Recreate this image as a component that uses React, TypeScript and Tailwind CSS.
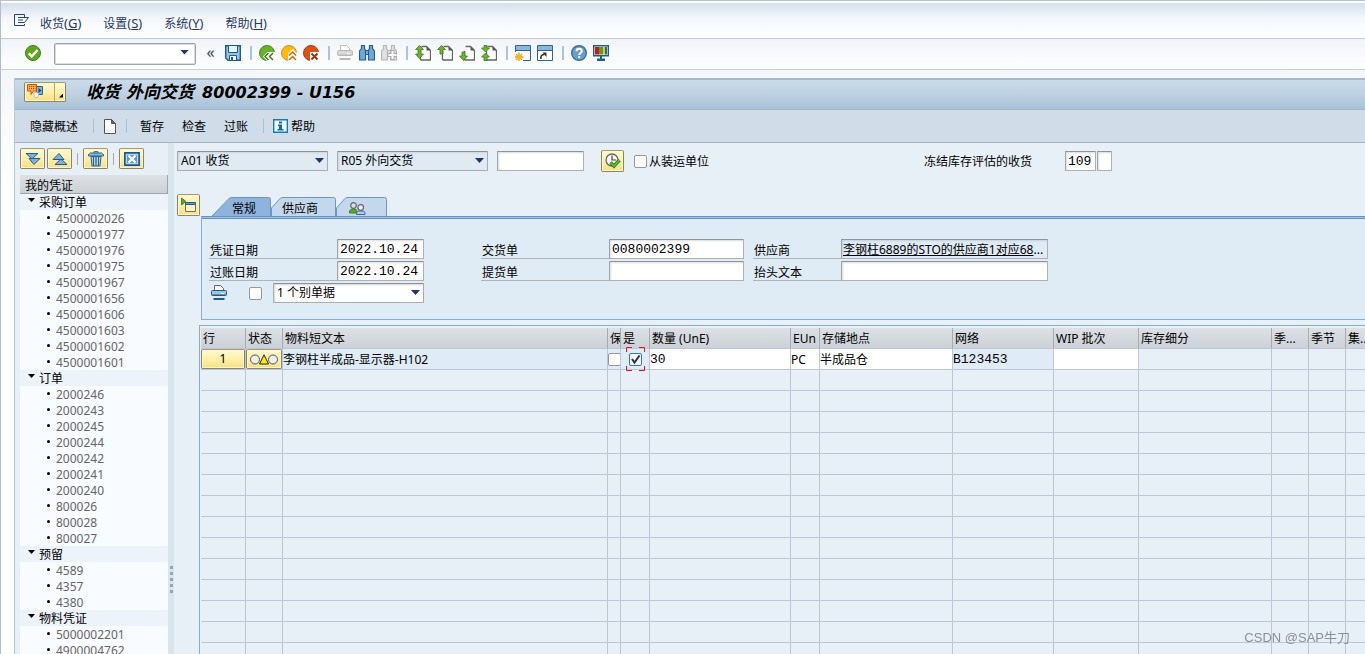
import { useState } from 'react';
import type { ReactNode } from 'react';
import clsx from 'clsx';

type TreeGroup = { label: string; items: string[] };

const MENU = [
  { label: '收货', key: 'G' },
  { label: '设置', key: 'S' },
  { label: '系统', key: 'Y' },
  { label: '帮助', key: 'H' },
];

const TREE: TreeGroup[] = [
  {
    label: '采购订单',
    items: [
      '4500002026',
      '4500001977',
      '4500001976',
      '4500001975',
      '4500001967',
      '4500001656',
      '4500001606',
      '4500001603',
      '4500001602',
      '4500001601',
    ],
  },
  {
    label: '订单',
    items: [
      '2000246',
      '2000243',
      '2000245',
      '2000244',
      '2000242',
      '2000241',
      '2000240',
      '800026',
      '800028',
      '800027',
    ],
  },
  { label: '预留', items: ['4589', '4357', '4380'] },
  { label: '物料凭证', items: ['5000002201', '4900004762'] },
];

const COLUMNS = [
  { label: '行', width: 'w-[45px]' },
  { label: '状态', width: 'w-[37px]' },
  { label: '物料短文本', width: 'w-[325px]' },
  { label: '保', width: 'w-[13px]' },
  { label: '是', width: 'w-[29px]' },
  { label: '数量 (UnE)', width: 'w-[141px]' },
  { label: 'EUn', width: 'w-[29px]' },
  { label: '存储地点', width: 'w-[133px]' },
  { label: '网络', width: 'w-[101px]' },
  { label: 'WIP 批次', width: 'w-[85px]' },
  { label: '库存细分', width: 'w-[133px]' },
  { label: '季...', width: 'w-[37px]' },
  { label: '季节', width: 'w-[37px]' },
  { label: '集...', width: 'w-[37px]' },
];

const EMPTY_ROWS = 40;

const SANS = "font-['Noto_Sans','Noto_Sans_CJK_SC',sans-serif]";
const MONO = "font-['Liberation_Mono','Noto_Sans_CJK_SC',monospace] text-[13px]";
const FIELD =
  'h-5 min-w-0 rounded-[1px] border border-[#b0b0b0] border-t-[#909599] border-l-[#a0a5a9] bg-white pl-0.5 leading-4 text-black shadow-[inset_1px_1px_2px_#d8dde2] outline-none';
const YELLOW =
  'flex items-center justify-center rounded-[2px] border border-[#8b8466] border-t-[#a19a79] bg-linear-to-b from-[#fff9d2] via-[#fff0a8] to-[#f8df83] shadow-[inset_0_0_0_1px_#fff6cd]';

/* ---------- icons ---------- */

function Svg({ w = 16, h = 16, children }: { w?: number; h?: number; children: ReactNode }) {
  return (
    <svg width={w} height={h} viewBox={`0 0 ${w} ${h}`} fill="none" className="block shrink-0" aria-hidden="true">
      {children}
    </svg>
  );
}

function CommandIcon() {
  return (
    <Svg w={16} h={13}>
      <path d="M10.500 3V.5H.5v11h10V10" stroke="#28406f" />
      <path d="M4 3.500h10.500L10.500 8.500H4M4 6h5" stroke="#28406f" />
    </Svg>
  );
}

function OkIcon() {
  return (
    <Svg>
      <circle cx="8" cy="8" r="7.500" fill="#62a81f" stroke="#3f7d18" />
      <path d="M3.800 8.300l3 3 5.700-6.300" stroke="#fff" strokeWidth="2.400" />
    </Svg>
  );
}

function SaveIcon() {
  return (
    <Svg>
      <path d="M.7.7h14.600v14.600H3L.7 13z" fill="#9cc3e4" stroke="#15608f" strokeWidth="1.400" />
      <path d="M3.500 1v6.500h9V1" fill="#eaf3fa" stroke="#15608f" />
      <path d="M4.500 15v-4.500h7V15" fill="#fff" stroke="#15608f" />
      <path d="M6 12h2v3H6z" fill="#15608f" />
    </Svg>
  );
}

function BackIcon() {
  return (
    <Svg>
      <circle cx="8" cy="8" r="7.500" fill="#6bb12a" stroke="#3f8a1a" />
      <path d="M4 11.500l4.500-4.500H16v9H8z" fill="#fff" />
      <path d="M9.500 8L6 11.500 9.500 15M14 8l-3.500 3.500L14 15" stroke="#3c7d1c" strokeWidth="1.500" />
    </Svg>
  );
}

function ExitIcon() {
  return (
    <Svg>
      <circle cx="8" cy="8" r="7.500" fill="#fdbb12" stroke="#e08a10" />
      <path d="M11.500 4L17 9v7H7V9z" fill="#fff" />
      <path d="M8 10.500L11.500 7l3.500 3.500M8 15l3.500-3.500L15 15" stroke="#d9650c" strokeWidth="1.500" />
    </Svg>
  );
}

function CancelIcon() {
  return (
    <Svg>
      <circle cx="8" cy="8" r="7.500" fill="#db5316" stroke="#b23a0c" />
      <path d="M7 7h9v9H7z" fill="#fff" />
      <path d="M8.500 8.500l6 6m0-6l-6 6" stroke="#9c3413" strokeWidth="2" />
    </Svg>
  );
}

function PrinterIcon({ disabled = false }: { disabled?: boolean }) {
  const line = disabled ? '#b9b9b9' : '#1a5c8a';
  return (
    <Svg>
      <path d="M3.500 7V.5h6l3 3V7" fill="#fff" stroke={disabled ? '#b9b9b9' : '#666'} />
      <rect x=".5" y="5.500" width="15" height="5" rx="1" fill={disabled ? '#d9d9d9' : '#9fc6e6'} stroke={line} />
      <path d="M10 8.500h3" stroke="#fff" />
      <path d="M1 10h14" stroke={line} />
      <path d="M2.500 13h11v2h-11z" fill={line} />
    </Svg>
  );
}

function FindIcon({ next = false }: { next?: boolean }) {
  const line = next ? '#b5b5b5' : '#1f5f92';
  const fill = next ? '#e0e0e0' : '#74a9d6';
  return (
    <Svg>
      <path
        d="M2.500.5h3v3l1 2v9.500H.5V6l2-2.500zM10.500.5h3v3l2 2.500v9h-6V5.500l1-2z"
        fill={fill}
        stroke={line}
        strokeWidth="1.200"
      />
      <path d="M6.500 5.500h3v4h-3z" fill={fill} stroke={line} />
      {next && <path d="M11.500 5v10M6.500 10h10" stroke="#aaa" strokeWidth="4" />}
      {next && <path d="M11.500 6v8M7.500 10h8" stroke="#fff" strokeWidth="2" />}
    </Svg>
  );
}

// Small green arrows placed over a sheet: the four list paging commands
function PageIcon({ arrows }: { arrows: string }) {
  return (
    <Svg>
      <path d="M6.500 1.500h5l4 4v9.500H5.500" fill="#fff" stroke="#666" strokeWidth="1.300" />
      <path d="M5.500 6v9" stroke="#666" strokeWidth="1.300" />
      <path d="M11.500 1.500v4h4z" fill="#555" />
      <path d={arrows} fill="#6eb52c" stroke="#397b1d" strokeWidth=".8" />
    </Svg>
  );
}

const PAGE_ARROWS = [
  'M4.500.5l4 4H6V9h2.500l-4 4.500-4-4.500H3V4.500H.5z',
  'M4.500.5l4 4H6V9H3V4.500H.5z',
  'M3 7h3v4h2.500l-4 4.500-4-4.500H3z',
  'M3 .5h3V3h2.500l-4 4-4-4H3zM4.500 8l4 4H6v3.500H3V12H.5z',
];

function WindowIcon({ shortcut = false }: { shortcut?: boolean }) {
  return (
    <Svg>
      <path d="M.5.500h15v15H.5z" fill="#fff" stroke="#286797" />
      <path d="M1 1h14v4H1z" fill="#8ab7df" />
      <path d="M0 5.500h16" stroke="#286797" />
      {shortcut ? (
        <>
          <path d="M4 14c-.5-3 .5-4.500 3.500-4.500" stroke="#333" strokeWidth="1.600" />
          <path d="M5.500 7.500h4v4.500z" fill="#333" />
        </>
      ) : (
        <>
          <path d="M0 7h8v9H0z" fill="#fff" />
          <path d="M4 7.500v9M-.5 12h9M1 9l6 6M7 9l-6 6" stroke="#f09a12" strokeWidth="1.400" />
          <circle cx="4" cy="12" r="2.200" fill="#fdb714" />
        </>
      )}
    </Svg>
  );
}

function HelpIcon() {
  return (
    <Svg>
      <circle cx="8" cy="8" r="7.300" fill="#6a9fcb" stroke="#396f9d" strokeWidth="1.400" />
      <path d="M5.500 6.200C5.500 2.800 10.800 3 10.800 6c0 2-2.600 2-2.600 4" stroke="#fff" strokeWidth="1.900" />
      <path d="M7.200 11.200h2v2h-2z" fill="#fff" />
    </Svg>
  );
}

function MonitorIcon() {
  return (
    <Svg>
      <path d="M.7.700h14.600v10H.7z" fill="#fff" stroke="#1c5d8c" strokeWidth="1.400" />
      <path d="M2 2h4v7.500H2z" fill="#d21414" />
      <path d="M6 2h4v7.500H6z" fill="#4da32c" />
      <path d="M10 2h2v7.500h-2z" fill="#f5c400" />
      <path d="M12 2h2v7.500h-2z" fill="#1d67b0" />
      <path d="M7 11h2v3H7zM4 13.500h8V16H4z" fill="#1c5d8c" />
    </Svg>
  );
}

function ServiceIcon() {
  return (
    <Svg w={17} h={15}>
      <path d="M9.500 2.500h6v8h-6z" fill="#7db5e0" stroke="#28648f" />
      <path d="M11.500 4l3 2.500-3 2.500z" fill="#16456c" />
      <path d="M.5.500h9v6.500H6.500L4 10.500V7H.5z" fill="#f7b04a" stroke="#d94e12" />
      <path d="M2 2.500h6.500M2 4.500h6.500" stroke="#c73f10" strokeDasharray="1 1" />
      <path d="M6.500 9.500l3-1.500 2.500 2-1.500 3.500H8z" fill="#fff" stroke="#999" strokeWidth=".6" />
    </Svg>
  );
}

function SheetIcon() {
  return (
    <Svg w={12} h={15}>
      <path d="M.5.500h7l4 4v10H.5z" fill="#fff" stroke="#555" />
      <path d="M7.500.5v4h4z" fill="#666" stroke="#555" />
    </Svg>
  );
}

function InfoIcon() {
  return (
    <Svg w={15} h={14}>
      <path d="M.7.700h13.600v12.600H.7z" fill="#f4f9fc" stroke="#0d7fb8" strokeWidth="1.400" />
      <path d="M6 2.500h3v2H6zM5 5.500h4V10h1.500v1.500h-6V10H6V7H5z" fill="#0a6ea8" />
    </Svg>
  );
}

function ExpandIcon({ up = false }: { up?: boolean }) {
  return (
    <Svg w={16} h={12}>
      <g transform={up ? 'rotate(180 8 6)' : undefined} fill="#7fb1dc" stroke="#1e5f92">
        <path d="M4 5.500h11L9 11.500z" />
        <path d="M1 .5h12L7 6z" />
      </g>
    </Svg>
  );
}

function TrashIcon() {
  return (
    <Svg w={16} h={16}>
      <path d="M3 5.500h10l-1 9.500H4z" fill="#c3dcf0" stroke="#28648f" />
      <path d="M5.500 6v9M8 6v9M10.500 6v9" stroke="#28648f" strokeWidth="1.200" />
      <path d="M.5 5V3.500l2-1.500h11l2 1.500V5z" fill="#8dbbe0" stroke="#28648f" />
      <path d="M6 2V.7h4V2" stroke="#28648f" />
    </Svg>
  );
}

function CloseBoxIcon() {
  return (
    <Svg w={16} h={14}>
      <path d="M.7.700h14.600v12.600H.7z" fill="#5f9bcb" stroke="#1d5a8a" strokeWidth="1.400" />
      <path d="M2.500 2.500h11v9h-11z" stroke="#d4e6f4" strokeWidth=".8" />
      <path d="M4.500 3.500l7 7m0-7l-7 7" stroke="#fff" strokeWidth="2.200" />
    </Svg>
  );
}

function OpenDetailIcon() {
  return (
    <Svg w={16} h={16}>
      <path d="M4.500 5.500h10v9h-10z" fill="#fff3bd" stroke="#66707a" />
      <path d="M4.500 5.500h10v2h-10z" fill="#6aa3d3" stroke="#1d5a8a" />
      <path d="M.5 1l4.500 3.500L.5 8z" fill="#5da52a" stroke="#357a18" strokeWidth=".8" />
    </Svg>
  );
}

function ExecuteIcon() {
  return (
    <Svg>
      <circle cx="7" cy="7" r="6" fill="#f7f7ef" stroke="#666" strokeWidth="1.300" />
      <path d="M7 2.500V7h4" stroke="#444" strokeWidth="1.200" />
      <path d="M5.500 9.500L9 13l5.500-6" stroke="#2b7a18" strokeWidth="3.400" />
      <path d="M5.500 9.500L9 13l5.500-6" stroke="#6fbf3a" strokeWidth="1.600" />
    </Svg>
  );
}

function PartnersIcon() {
  return (
    <Svg w={17} h={13}>
      <path d="M.5 11V9l2-2h4l1.500 2v2z" fill="#58a829" stroke="#3a8418" />
      <circle cx="4.500" cy="3.500" r="2.800" fill="#dedede" stroke="#666" strokeWidth="1.200" />
      <path d="M7.500 12.500v-2l2-1.500h4.500l2 1.500v2z" fill="#a9cdea" stroke="#2f6c9c" />
      <circle cx="11.700" cy="5.500" r="2.800" fill="#efefef" stroke="#666" strokeWidth="1.200" />
    </Svg>
  );
}

function TrafficLight() {
  return (
    <Svg w={28} h={11}>
      <circle cx="5" cy="5.500" r="4.500" fill="#eee" stroke="#555" />
      <circle cx="23" cy="5.500" r="4.500" fill="#eee" stroke="#555" />
      <path d="M14 .8l4.500 9.200h-9z" fill="#ffec00" stroke="#222" />
    </Svg>
  );
}

/* ---------- controls ---------- */

function IconButton({ label, children }: { label: string; children: ReactNode }) {
  return (
    <button type="button" aria-label={label} title={label}>
      {children}
    </button>
  );
}

function ToolSeparator() {
  return <span className="mr-px ml-[3px] h-3.5 w-0.5 bg-[#a9c4de]" />;
}

function DropDown({ label, value, className }: { label: string; value: string; className: string }) {
  return (
    <div className="relative flex">
      <select
        aria-label={label}
        className={clsx(
          'h-5 appearance-none rounded-[1px] border border-[#a9adb0] border-t-[#8c9296] pl-[3px] leading-4 text-black shadow-[inset_1px_1px_2px_#ccd6de] outline-none',
          className,
        )}
      >
        <option>{value}</option>
      </select>
      <span className="pointer-events-none absolute top-[7px] right-1 h-[5px] w-[9px] bg-[#1f356b] [clip-path:polygon(0_0,100%_0,50%_100%)]" />
    </div>
  );
}

function CheckBox({ id, label }: { id?: string; label?: string }) {
  return (
    <input
      id={id}
      type="checkbox"
      aria-label={label}
      className="block size-[13px] shrink-0 appearance-none rounded-[2px] border border-[#979797] bg-white checked:bg-[#2f6fad]"
    />
  );
}

function Field({
  id,
  label,
  value,
  labelWidth,
  inputWidth,
}: {
  id: string;
  label: string;
  value: string;
  labelWidth: string;
  inputWidth: string;
}) {
  return (
    <div className="flex">
      <label htmlFor={id} className={clsx('h-5 shrink-0 border-b border-[#aeb3b7] pl-px leading-6', labelWidth)}>
        {label}
      </label>
      <input id={id} defaultValue={value} className={clsx(FIELD, MONO, inputWidth)} />
    </div>
  );
}

/* ---------- page parts ---------- */

function MenuBar() {
  return (
    <nav className="flex h-[39px] shrink-0 items-center border-b border-[#c3ccd8] bg-linear-to-b from-[#cddae8] via-[#f3f6fa] via-45% to-white pt-2 pl-[13px] text-[#1f3864] shadow-[inset_0_1px_0_#b4c3d4,inset_0_3px_0_#ffffff]">
      <div className="mb-1.5">
        <CommandIcon />
      </div>
      <div className="flex gap-[22px] pt-px pl-2.5">
        {MENU.map((item) => (
          <button key={item.key} type="button" className="leading-4">
            {item.label}
            <span className="text-[13px]">
              (<u>{item.key}</u>)
            </span>
          </button>
        ))}
      </div>
    </nav>
  );
}

function StandardToolbar() {
  return (
    <div className="flex h-[31px] shrink-0 items-center gap-1.5 border-b border-[#ccd0d8] bg-linear-to-b from-[#f1f4f9] to-white pb-0.5 pl-6">
      <IconButton label="回车">
        <OkIcon />
      </IconButton>
      <div className="relative ml-[7px] flex pt-px">
        <input
          aria-label="命令"
          className="h-[22px] w-[142px] rounded-[2px] border border-[#9da3a6] bg-white pr-5 pl-1 shadow-[inset_0_0_0_1px_#d9dcde] outline-none"
        />
        <span className="pointer-events-none absolute top-2 right-[7px] h-[5px] w-[9px] bg-[#1f356b] [clip-path:polygon(0_0,100%_0,50%_100%)]" />
      </div>
      <button type="button" className="w-[17px] pb-0.5 text-base leading-4 text-[#444]">
        «
      </button>
      <IconButton label="保存">
        <SaveIcon />
      </IconButton>
      <ToolSeparator />
      <IconButton label="返回">
        <BackIcon />
      </IconButton>
      <IconButton label="退出">
        <ExitIcon />
      </IconButton>
      <IconButton label="取消">
        <CancelIcon />
      </IconButton>
      <ToolSeparator />
      <IconButton label="打印">
        <PrinterIcon disabled />
      </IconButton>
      <IconButton label="查找">
        <FindIcon />
      </IconButton>
      <IconButton label="继续查找">
        <FindIcon next />
      </IconButton>
      <ToolSeparator />
      {PAGE_ARROWS.map((arrows, i) => (
        <IconButton key={arrows} label={['首页', '上一页', '下一页', '末页'][i]}>
          <PageIcon arrows={arrows} />
        </IconButton>
      ))}
      <ToolSeparator />
      <IconButton label="新建会话">
        <WindowIcon />
      </IconButton>
      <IconButton label="创建快捷方式">
        <WindowIcon shortcut />
      </IconButton>
      <ToolSeparator />
      <IconButton label="帮助">
        <HelpIcon />
      </IconButton>
      <IconButton label="定制布局">
        <MonitorIcon />
      </IconButton>
    </div>
  );
}

function TitleBar() {
  return (
    <header className="flex h-8 shrink-0 items-center border-t-2 border-b border-t-[#a3b8cc] border-b-[#9fb6cb] bg-linear-to-b from-[#cbdbe7] via-[#bed1e2] to-[#a9c1d8] pl-[9px]">
      <button type="button" aria-label="对象服务" className={clsx(YELLOW, 'mb-1.5 h-5 w-[42px] justify-start pl-0.5')}>
        <ServiceIcon />
        <span className="ml-2.5 h-full w-px bg-[#b3a878]" />
        <span className="mt-2 ml-1 size-1 bg-black [clip-path:polygon(100%_0,100%_100%,0_100%)]" />
      </button>
      <h1 className="mb-1 pl-5 font-['DejaVu_Sans','Noto_Sans_CJK_SC',sans-serif] leading-6 font-bold whitespace-nowrap text-black italic">
        <span className="pr-1 text-[17px]">收货 外向交货</span> <span className="text-base">80002399 - U156</span>
      </h1>
    </header>
  );
}

function AppToolbar() {
  const separator = <span className="h-3.5 w-px bg-[#a9bfd6]" />;
  return (
    <div className="flex h-[33px] shrink-0 items-center border-b border-[#a3b8cc] bg-[#d0dde8] pl-[15px]">
      <button type="button" className="pt-0.5">
        隐藏概述
      </button>
      <div className="flex items-center gap-2.5 pl-[15px]">
        {separator}
        <IconButton label="新建">
          <SheetIcon />
        </IconButton>
        {separator}
      </div>
      <div className="flex gap-[18px] px-[13px] pt-0.5">
        <button type="button">暂存</button>
        <button type="button">检查</button>
        <button type="button">过账</button>
      </div>
      <div className="flex items-center gap-[9px] pl-0.5">
        {separator}
        <button type="button" className="flex items-center gap-[3px]">
          <InfoIcon />
          <span className="pt-0.5">帮助</span>
        </button>
      </div>
    </div>
  );
}

function Overview() {
  return (
    <aside className="flex w-[153px] shrink-0 flex-col overflow-hidden pt-[5px] pl-[5px]">
      <div className="flex shrink-0 items-center gap-0.5">
        <button type="button" aria-label="全部展开" className={clsx(YELLOW, 'h-[21px] w-[25px]')}>
          <ExpandIcon />
        </button>
        <button type="button" aria-label="全部折叠" className={clsx(YELLOW, 'h-[21px] w-[25px]')}>
          <ExpandIcon up />
        </button>
        <span className="mx-[3px] h-3 w-px bg-[#a9a9a9]" />
        <button type="button" aria-label="删除" className={clsx(YELLOW, 'h-[21px] w-[25px]')}>
          <TrashIcon />
        </button>
        <span className="mx-[3px] h-3 w-px bg-[#a9a9a9]" />
        <button type="button" aria-label="关闭" className={clsx(YELLOW, 'h-[21px] w-[25px]')}>
          <CloseBoxIcon />
        </button>
      </div>
      <h2 className="mt-1.5 h-[19px] shrink-0 border-r border-b border-[#9ba5ad] bg-linear-to-b from-[#dde1e4] to-[#cbd1d6] pl-[5px] leading-[21px]">
        我的凭证
      </h2>
      <ul className="grow bg-[#f8fbff]">
        {TREE.map((group) => (
          <TreeBranch key={group.label} group={group} />
        ))}
      </ul>
    </aside>
  );
}

function TreeBranch({ group }: { group: TreeGroup }) {
  const [open, setOpen] = useState(true);

  return (
    <li>
      <button
        type="button"
        aria-expanded={open}
        onClick={() => setOpen(!open)}
        className="flex h-4 w-full items-center gap-1 bg-[#edf3fb] pl-2"
      >
        <span className="mb-1 h-1 w-[7px] bg-black [clip-path:polygon(0_0,100%_0,50%_100%)]" />
        <span className="pt-0.5 leading-4">{group.label}</span>
      </button>
      {open && (
        <ul>
          {group.items.map((item) => (
            <li key={item} className="flex h-4 items-center gap-1.5 pl-[27px] text-[#666]">
              <span className="mb-0.5 size-[3px] rounded-full bg-black" />
              <span className="pt-0.5 leading-4">{item}</span>
            </li>
          ))}
        </ul>
      )}
    </li>
  );
}

function Splitter() {
  return (
    <div className="flex w-1.5 shrink-0 flex-col items-center justify-end gap-[3px] bg-[#d9e5ec] pb-[61px]">
      {[0, 1, 2, 3, 4].map((i) => (
        <span key={i} className="size-[3px] bg-[#98a4b0]" />
      ))}
    </div>
  );
}

function SelectionRow() {
  return (
    <div className="flex h-[22px] shrink-0 items-center pl-[3px]">
      <DropDown label="事务" value="A01 收货" className="w-[151px] bg-[#dfeaf3]" />
      <div className="pl-[9px]">
        <DropDown label="参考凭证" value="R05 外向交货" className="w-[151px] bg-[#dfeaf3]" />
      </div>
      <div className="flex pl-[9px]">
        <input aria-label="凭证编号" className={clsx(FIELD, 'w-[87px]')} />
      </div>
      <div className="pl-[17px]">
        <button type="button" aria-label="执行" className={clsx(YELLOW, 'h-[22px] w-[23px]')}>
          <ExecuteIcon />
        </button>
      </div>
      <div className="flex items-center gap-0.5 pl-2.5">
        <CheckBox id="from-hu" />
        <label htmlFor="from-hu" className="pt-0.5">
          从装运单位
        </label>
      </div>
      <div className="flex items-center pl-[215px]">
        <label htmlFor="movement" className="w-[141px] pt-0.5 whitespace-nowrap">
          冻结库存评估的收货
        </label>
        <input id="movement" defaultValue="109" className={clsx(FIELD, MONO, 'mr-px w-[31px]')} />
        <input aria-label="特殊库存" className={clsx(FIELD, 'w-[15px]')} />
      </div>
    </div>
  );
}

function Tab({ active = false, width, children }: { active?: boolean; width: number; children: ReactNode }) {
  const slope = active ? `M0 19L17 1.500Q18 .5 20 .5` : `M.5 19V11L9 1.500Q10 .5 12 .5`;
  return (
    <button
      type="button"
      role="tab"
      aria-selected={active}
      className={clsx('relative flex h-[19px] items-center', active ? 'pl-5' : 'pl-[11px]')}
      style={{ width }}
    >
      <svg width={width} height="19" className="absolute inset-0" fill={active ? '#8fb3dc' : '#c3d8ec'} aria-hidden="true">
        <path d={`${slope}H${width - 2.5}Q${width - 0.5} .5 ${width - 0.5} 2.500V19`} stroke="#6d97c0" />
      </svg>
      <span className="relative pt-1 leading-4">{children}</span>
    </button>
  );
}

function HeaderTabs() {
  return (
    <section className="shrink-0">
      <div className="flex h-[22px] pl-[3px]">
        <button type="button" aria-label="打开细节" className={clsx(YELLOW, 'h-[22px] w-[23px]')}>
          <OpenDetailIcon />
        </button>
        <div role="tablist" className="flex items-end pl-3">
          <Tab active width={59}>
            常规
          </Tab>
          <Tab width={65}>供应商</Tab>
          <Tab width={51}>
            <span className="flex pl-0.5">
              <PartnersIcon />
            </span>
          </Tab>
        </div>
      </div>
      <div className="ml-[27px] h-[104px] border-b border-l border-[#8aabca] bg-[#dfebf5]">
        <div className="h-[3px] border-y border-[#6690c0] bg-[#a2c0e4]" />
        <div className="flex pt-5 pl-[7px]">
          <div className="flex w-[272px] shrink-0 flex-col gap-0.5">
            <Field id="doc-date" label="凭证日期" value="2022.10.24" labelWidth="w-32" inputWidth="w-[87px]" />
            <Field id="post-date" label="过账日期" value="2022.10.24" labelWidth="w-32" inputWidth="w-[87px]" />
            <div className="flex items-center pl-0.5">
              <PrinterIcon />
              <div className="pr-[11px] pl-[22px]">
                <CheckBox label="打印" />
              </div>
              <DropDown label="打印版本" value="1 个别单据" className="w-[151px] bg-white" />
            </div>
          </div>
          <div className="flex w-[272px] shrink-0 flex-col gap-0.5">
            <Field id="delivery" label="交货单" value="0080002399" labelWidth="w-32" inputWidth="w-[135px]" />
            <Field id="lading" label="提货单" value="" labelWidth="w-32" inputWidth="w-[135px]" />
          </div>
          <div className="flex shrink-0 flex-col gap-0.5">
            <div className="flex">
              <span className="h-5 w-[88px] border-b border-[#aeb3b7] pl-px leading-6">供应商</span>
              <div className="h-5 w-[207px] overflow-hidden border border-[#b0b0b0] border-t-[#909599] border-l-[#a0a5a9] pl-px leading-5 whitespace-nowrap shadow-[inset_1px_1px_2px_#c5d2dc]">
                <a href="#vendor" className="underline">
                  李钢柱6889的STO的供应商1对应68
                </a>
                ...
              </div>
            </div>
            <Field id="header-text" label="抬头文本" value="" labelWidth="w-[88px]" inputWidth="w-[207px]" />
          </div>
        </div>
      </div>
    </section>
  );
}

const CELL = 'h-[21px] border-r border-b border-[#bdc6d6] p-0';

function ItemTable() {
  return (
    <div className="mt-[5px] ml-[25px] min-h-0 grow overflow-hidden border-t border-l border-[#8aabca] pt-0.5 pl-px">
      <table className="w-[1182px] table-fixed border-separate border-spacing-0">
        <colgroup>
          {COLUMNS.map((col) => (
            <col key={col.label} className={col.width} />
          ))}
        </colgroup>
        <thead>
          <tr>
            {COLUMNS.map((col) => (
              <th
                key={col.label}
                className="h-[21px] overflow-hidden border-r border-b border-r-[#a3abb5] border-b-[#bdc6d6] bg-linear-to-b from-[#dde1e5] to-[#ccd1d7] p-0 pt-0.5 pl-0.5 text-left leading-4 font-normal whitespace-nowrap"
              >
                {col.label}
              </th>
            ))}
          </tr>
        </thead>
        <tbody>
          <tr>
            <td className={CELL}>
              <button type="button" className={clsx(YELLOW, 'h-5 w-full')}>
                1
              </button>
            </td>
            <td className={CELL}>
              <button type="button" aria-label="状态" className={clsx(YELLOW, 'h-5 w-full')}>
                <TrafficLight />
              </button>
            </td>
            <td className={clsx(CELL, 'bg-[#dfebf5]')}>
              <div className="h-5 leading-[21px]">李钢柱半成品-显示器-H102</div>
            </td>
            <td className={clsx(CELL, 'overflow-hidden bg-[#dfebf5]')}>
              <CheckBox label="保" />
            </td>
            <td className={clsx(CELL, 'relative bg-[#dfebf5]')}>
              <CheckedCell />
            </td>
            <td className={clsx(CELL, 'bg-white')}>
              <input aria-label="数量" defaultValue="30" className={clsx(MONO, 'block h-5 w-full outline-none')} />
            </td>
            <td className={clsx(CELL, 'bg-white')}>
              <input aria-label="单位" defaultValue="PC" className="block h-5 w-full outline-none" />
            </td>
            <td className={clsx(CELL, 'bg-white')}>
              <input aria-label="存储地点" defaultValue="半成品仓" className="block h-5 w-full outline-none" />
            </td>
            <td className={clsx(CELL, MONO, 'bg-[#dfebf5]')}>
              <div className="h-5 leading-[21px]">B123453</div>
            </td>
            <td className={clsx(CELL, 'bg-white')}>
              <input aria-label="WIP 批次" className="block h-5 w-full outline-none" />
            </td>
            <td className={CELL} />
            <td className={CELL} />
            <td className={CELL} />
            <td className={CELL} />
          </tr>
          {Array.from({ length: EMPTY_ROWS }, (_, row) => (
            <tr key={row}>
              {COLUMNS.map((col) => (
                <td key={col.label} className={CELL} />
              ))}
            </tr>
          ))}
        </tbody>
      </table>
    </div>
  );
}

// Checkbox that holds the focus, framed by red corner marks
function CheckedCell() {
  const [checked, setChecked] = useState(true);

  return (
    <div className="flex items-center pl-2">
      <input
        type="checkbox"
        aria-label="是"
        checked={checked}
        onChange={() => setChecked(!checked)}
        className="size-[13px] appearance-none rounded-[2px] border border-[#3d75b5] bg-[#f1f6fb]"
      />
      <svg width="20" height="25" fill="none" className="pointer-events-none absolute -top-0.5 left-[5px]" aria-hidden="true">
        <path d="M.5 5V.5H6M13 .5h5.500V5M.5 19v4.500H6M13 23.500h5.500V19" stroke="#e3171b" />
        {checked && <path d="M6 12l2.500 3.500L13.500 8.500" stroke="#2b2b4b" strokeWidth="2" />}
      </svg>
    </div>
  );
}

export default function App() {
  return (
    <div className={clsx('flex h-screen flex-col overflow-hidden border-l border-[#b0bdcd] bg-white text-xs text-black', SANS)}>
      <MenuBar />
      <StandardToolbar />
      <div className="flex min-h-0 grow flex-col bg-linear-to-b from-[#f3f6fa] to-white to-20% pt-2 pl-[13px]">
        <div className="flex min-h-0 grow flex-col border-l border-[#b8c9d9] bg-[#e8f0f7]">
          <TitleBar />
          <AppToolbar />
          <div className="flex min-h-0 grow">
            <Overview />
            <Splitter />
            <main className="flex min-w-0 grow flex-col overflow-hidden pt-[7px]">
              <SelectionRow />
              <div className="h-[22px] shrink-0" />
              <HeaderTabs />
              <ItemTable />
            </main>
          </div>
        </div>
      </div>
      <div className="pointer-events-none fixed right-[15px] bottom-2 font-['Liberation_Sans','Noto_Sans_CJK_SC',sans-serif] text-[13px] leading-4 text-[#8b9097]">
        CSDN @SAP牛刀
      </div>
    </div>
  );
}
